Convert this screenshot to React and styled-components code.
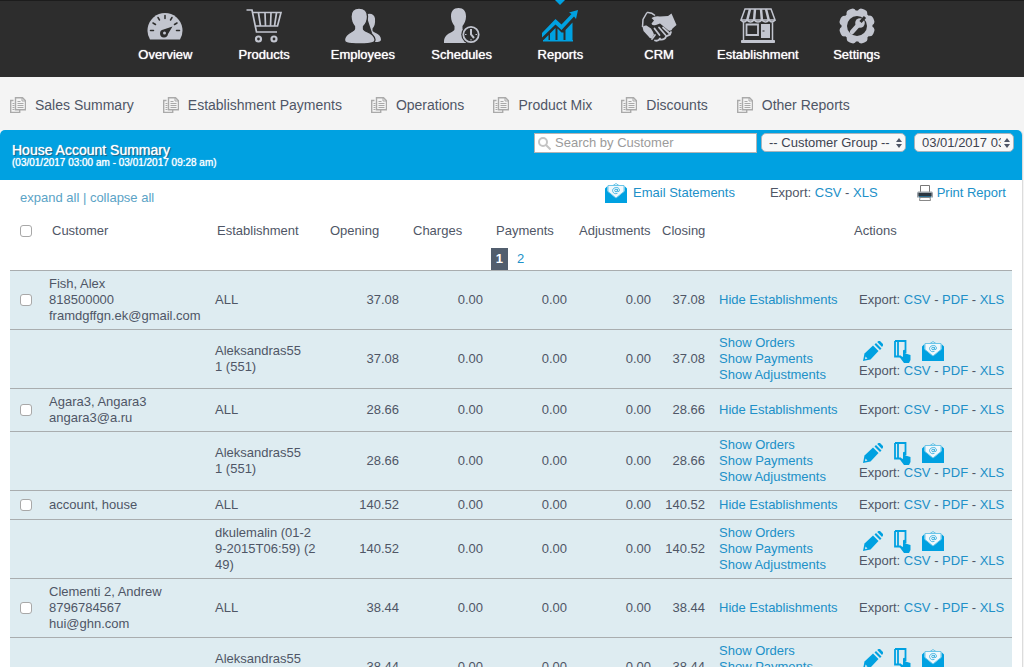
import React, { useState } from 'react'
import styled, { createGlobalStyle } from 'styled-components'

const GlobalStyle = createGlobalStyle`
    *{
        box-sizing:border-box;
    }
    body{
        margin:0;
        background-color:#f4f4f4;
        color:#4f5666;
        font-family:"Liberation Sans", Arial, sans-serif;
        font-size:13px;
        line-height:16px;
    }
`

const Nav = styled.nav`
    background-color:#2d2d2d;
    border-top:1px solid #1c1c1c;
    height:77px;
    padding-right:2px;
`
const NavList = styled.div`
    display:flex;
    max-width:790px;
    margin:0 auto;
`
const NavLink = styled.a`
    flex:1;
    display:flex;
    flex-direction:column;
    align-items:center;
    position:relative;
    padding-top:7px;
    gap:3px;
    color:#fff;
    text-decoration:none;
    text-shadow:0 0 1px #fff;

    svg{
        color:${props => props.$active ? "#00a1e1" : "#c2c5cf"};
    }
`
const Marker = styled.span`
    position:absolute;
    top:-1px;
    left:50%;
    margin-left:-5px;
    border:5px solid transparent;
    border-top-color:#00a1e1;
    border-bottom:0;
`

const Tabs = styled.nav`
    display:flex;
    flex-wrap:wrap;
    gap:29px;
    padding:20px 10px 17px;
`
const Tab = styled.a`
    display:flex;
    align-items:center;
    gap:9px;
    color:#4f5666;
    font-size:14px;
    text-decoration:none;
`

const Panel = styled.main`
    margin-right:1px;
    background-color:#fff;
    border-right:1px solid #dcdcdc;
    border-radius:5px 5px 0 0;
`
const PanelHeader = styled.header`
    display:flex;
    justify-content:space-between;
    align-items:flex-start;
    height:50px;
    padding:3px 8px 0 12px;
    background-color:#00a1e1;
    border-radius:5px 5px 0 0;
`
const Title = styled.h1`
    margin:9px 0 0;
    color:#fff;
    font-size:14px;
    font-weight:normal;
    line-height:16px;
    text-shadow:0 0 1px #fff, 1px 1px 1px #1d4a66;
`
const Period = styled.p`
    margin:0;
    color:#fff;
    font-size:10px;
    line-height:10px;
    text-shadow:0 0 1px #fff;
`
const Filters = styled.form`
    display:flex;
    align-items:flex-start;
`
const SearchBox = styled.label`
    display:flex;
    align-items:center;
    gap:4px;
    width:223px;
    height:20px;
    padding-left:3px;
    background-color:#fff;
    border:1px solid #b4b4b4;
`
const SearchInput = styled.input`
    flex:1;
    min-width:0;
    padding:0;
    border:0;
    outline:0;
    background:none;
    color:#4f5666;
    font:inherit;

    &::placeholder{
        color:#9b9b9b;
    }
`
const SelectBox = styled.span`
    position:relative;
    width:${props => props.$width}px;
    margin-left:${props => props.$gap}px;

    svg{
        position:absolute;
        top:5px;
        right:3px;
        pointer-events:none;
    }
`
const Select = styled.select`
    appearance:none;
    display:block;
    width:100%;
    height:19px;
    padding:0 12px 0 7px;
    border:1px solid #a8b4bc;
    border-radius:5px;
    background-color:#f8f8f8;
    color:#3d4350;
    font:inherit;
`

const Toolbar = styled.div`
    display:flex;
    align-items:flex-start;
    justify-content:space-between;
    height:38px;
    padding:1px 16px 0 20px;
`
const ExpandLinks = styled.div`
    padding-top:9px;
    color:#5ba3c6;

    a{
        color:inherit;
        text-decoration:none;
    }
`
const Tools = styled.div`
    display:flex;
    align-items:center;
    height:24px;
`
const Link = styled.a`
    color:#2090c8;
    text-decoration:none;
`
const ToolLink = styled(Link)`
    display:flex;
    align-items:center;
    gap:${props => props.$gap}px;
`
const ToolExport = styled.span`
    margin:0 39px 0 35px;
`

const Table = styled.table`
    display:block;
    margin:0 10px;
    border-spacing:0;

    thead, tbody{
        display:block;
    }
`
const HeadRow = styled.tr`
    display:grid;
    grid-template-columns:42px 1fr 113px 83px 83px 83px 83px 192px 158px;
    align-items:center;
    height:25px;
`
const HeadCell = styled.th`
    padding:0;
    font-weight:normal;
    text-align:left;
`
const PagerRow = styled.tr`
    display:grid;
    height:27px;
`
const Pager = styled.td`
    display:flex;
    justify-content:center;
    align-items:flex-end;
    padding:0 0 0 2px;
`
const Page = styled.a`
    padding:3px 5px;
    background-color:${props => props.$current ? "#525e6e" : "transparent"};
    color:${props => props.$current ? "#fff" : "#2090c8"};
    font-weight:${props => props.$current ? "bold" : "normal"};
    text-decoration:none;
    margin-right:4px;
`
const Row = styled.tr`
    display:grid;
    grid-template-columns:34px 1fr 110px 84px 84px 84px 84px 54px 144px 158px;
    align-items:center;
    min-height:29px;
    padding:5px 0;
    background-color:#deecf1;
    border-top:1px solid #a9adaf;
`
const Cell = styled.td`
    padding:0 5px;
`
const TextCell = styled(Cell)`
    white-space:pre;
`
const NumberCell = styled(Cell)`
    text-align:right;
`
const LinkCell = styled(Cell)`
    display:flex;
    flex-direction:column;
    align-items:flex-start;
    padding-left:9px;
`
const Checkbox = styled.input`
    appearance:none;
    display:block;
    width:12px;
    height:12px;
    margin:0 0 0 ${props => props.$inRow ? 5 : 10}px;
    border:1px solid #a8a8a8;
    border-radius:3px;
    background-color:#fff;

    &:checked{
        background-color:#2090c8;
    }
`
const Actions = styled.div`
    display:flex;
    align-items:center;
    height:24px;
    padding-left:4px;
    gap:11px;
`
const IconButton = styled.button`
    display:block;
    padding:0;
    border:0;
    background:none;
    color:#00a1e1;
    cursor:pointer;

    svg{
        display:block;
    }
`

const GaugeIcon = () => (
    <svg width="36" height="36" viewBox="0 0 36 36" aria-hidden="true">
        <path d="M3 31.500A17.500 17.500 0 1 1 33 31.500Z" fill="currentColor" />
        <g stroke="#2d2d2d" strokeWidth="1.500" strokeLinecap="round">
            <path d="M3.500 22.500h3M29.500 22.500h3M6 15l2.500 1.500M30 15l-2.500 1.500M11 9.500l1.500 2.500M25 9.500L23.500 12M18 7.500v3" />
        </g>
        <path d="M25.500 18.500L16.500 21.500A4 4 0 1 0 21 26Z" fill="#2d2d2d" />
        <circle cx="17.500" cy="25" r="1.500" fill="currentColor" />
    </svg>
)
const CartIcon = () => (
    <svg width="36" height="36" viewBox="0 0 36 36" fill="none" stroke="currentColor" strokeWidth="1.700" aria-hidden="true">
        <path d="M.5 2H6l4.500 22H31M7 4.500H35L31.500 18H10M12.500 5l2 13M19 5l.5 13M25 5l-.5 13M30.500 5l-2 13" />
        <circle cx="12.500" cy="31" r="2.500" strokeWidth="2.200" />
        <circle cx="28" cy="31" r="2.500" strokeWidth="2.200" />
    </svg>
)
const PeopleIcon = () => (
    <svg width="36" height="36" viewBox="0 0 36 36" fill="currentColor" aria-hidden="true">
        <path d="M21 6.500c4-2 8.500-.5 9 4 .4 5-.5 8-2.500 10v2c0 2 8.500 3 8.500 9 0 2-2 2.500-6 2.500Z" />
        <path d="M14 0c6 0 8.500 3.500 8.500 8.500 0 4-1.500 7.500-4 10v2.500c0 3 10.500 2.500 11.500 10.500.3 2.500-1 4.500-15 4.500S-.5 34.500-.5 32C0 24 9.500 24 9.500 21v-2.500C7.500 16 6 12.500 6 8.500 6 3.500 8.500 0 14 0Z" stroke="#2d2d2d" strokeWidth="1.300" />
    </svg>
)
const PersonClockIcon = () => (
    <svg width="36" height="36" viewBox="0 0 36 36" fill="currentColor" aria-hidden="true">
        <path d="M14.500 0c5 0 7.500 3 7.500 8.500 0 4-1.500 7-3.500 9.500v3c0 2.500 8 3 10 7v7H0c-.5-11 10.500-10 10.500-14v-3C8.500 15.500 7 12.500 7 8.500 7 3 9.500 0 14.500 0Z" />
        <circle cx="27" cy="26.500" r="9.700" fill="#2d2d2d" />
        <circle cx="27" cy="26.500" r="7.700" fill="none" stroke="currentColor" strokeWidth="1.800" />
        <path d="M27 21v5.500l3 3.500" fill="none" stroke="currentColor" strokeWidth="2" />
        <path d="M21 26.500h1.500M31.500 26.500H33M27 31v1.500" stroke="currentColor" />
    </svg>
)
const ReportsIcon = () => (
    <svg width="36" height="36" viewBox="0 0 36 36" fill="currentColor" aria-hidden="true">
        <path d="M0 25L13.500 11l6 5.500L29.500 6 27 4.500 36 2l-2 9-2-2.500L19.500 22 13.500 16.500 0 29.500Z" />
        <path d="M1 32.500L6.500 27V33H1ZM8 25.500l5.500-5.500v13H8ZM15.500 20.500l4 4h2V33h-6ZM23.500 22l7-7.500V33h-7Z" />
        <path d="M1 32h30v1.500H1Z" />
    </svg>
)
const HandshakeIcon = () => (
    <svg width="36" height="36" viewBox="0 0 36 36" fill="currentColor" aria-hidden="true">
        <path d="M10.500 10Q14 7.500 19 8.500l8-.500 3.500-2.500L35.500 17l-4 3.500q-1 3-4 2L19 15.500l-4 1.500q-4.500 1-4.500-1.500l2.500-3Z" />
        <path d="M6 4.500L2 11.500 1.500 19M6 4.500q4.500-.5 8 3" fill="none" stroke="currentColor" strokeWidth="1.500" />
        <path d="M1.500 19Q3 17 5.500 17.500l4.500 3q2 3 3 6l-2 3.500q-2 1-3-1L2.500 23Z" />
        <path d="M13.500 20.500l5 6.500M18 19.500l6.500 7.500M22 19.500l6 5.500M11 31l3-4M14 32.500q3 1 5-2M19 31.500q5 .5 6-3l4-2 1-2.500" fill="none" stroke="currentColor" strokeWidth="1.800" strokeLinecap="round" />
    </svg>
)
const StoreIcon = () => (
    <svg width="36" height="36" viewBox="0 0 36 36" fill="none" stroke="currentColor" aria-hidden="true">
        <path d="M5 1h26l4 11H1Z" strokeWidth="1.500" />
        <path d="M10 1L7 13M15 1l-1 12M21 1l1 12M26 1l3 12" strokeWidth="2.500" />
        <path d="M1 12q3 4 6 0 3.500 4 7 0 4 4 8 0 3.500 4 7 0 3 4 6 0M3.500 14v18M32.500 14v18" strokeWidth="1.500" />
        <path d="M6.500 16.500H18v10.500H6.500Z" strokeWidth="1.800" />
        <path d="M21 16h9v14h-9Z" fill="currentColor" stroke="none" />
        <path d="M22.500 23h2" stroke="#2d2d2d" />
        <path d="M1.500 32.500h33v2h-33Z" fill="currentColor" />
    </svg>
)
const SettingsIcon = () => (
    <svg width="36" height="36" viewBox="0 0 36 36" fill="currentColor" aria-hidden="true">
        {[22, 67, 112, 157].map(angle => (
            <rect key={angle} x="13" y="0" width="10" height="36" rx="4" transform={`rotate(${angle} 18 18)`} />
        ))}
        <circle cx="18" cy="18" r="15.500" />
        <circle cx="18" cy="18" r="10" fill="#2d2d2d" />
        <path d="M13 24l8-9" stroke="currentColor" strokeWidth="4.500" strokeLinecap="round" />
        <circle cx="21" cy="15" r="4.800" />
        <path d="M21.500 14l4.500-5" stroke="#2d2d2d" strokeWidth="3" />
    </svg>
)
const PagesIcon = () => (
    <svg width="16" height="16" viewBox="0 0 16 16" fill="none" stroke="#aaa" aria-hidden="true">
        <path d="M3.500 3.500H.700v12h9v-2.500" strokeWidth="1.400" />
        <path d="M5.500.700h7l3 3v9h-10Z" fill="#f4f4f4" strokeWidth="1.400" />
        <path d="M12 1v3h3M7.500 4.500h3M7.500 6.500h6M7.500 8.500h6M7.500 10.500h6M2.500 6.500h2M2.500 8.500h2M2.500 10.500h2M2.500 12.500h2" />
    </svg>
)
const SearchIcon = () => (
    <svg width="13" height="13" viewBox="0 0 13 13" fill="none" stroke="#c4c4c4" strokeWidth="2" aria-hidden="true">
        <circle cx="5" cy="5" r="4" />
        <path d="M8 8l4.500 4.500" />
    </svg>
)
const ArrowsIcon = () => (
    <svg width="8" height="10" viewBox="0 0 8 10" fill="#4f5666" aria-hidden="true">
        <path d="M4 0l3 4H1ZM4 10L1 6h6Z" />
    </svg>
)
const MailIcon = () => (
    <svg width="22" height="20" viewBox="0 0 22 20" aria-hidden="true">
        <path d="M0 5.500L2.500 3v5l8.500 7 8.500-7V3L22 5.500V20H0Z" fill="#00a1e1" />
        <path d="M3 8.500V2.500h16v6L11 15Z" fill="#f0f8fc" stroke="#6cc5e8" />
        <path d="M8 2.500l3-2 3 2" fill="none" stroke="#6cc5e8" />
        <circle cx="11" cy="7.500" r="1.300" fill="none" stroke="#3fb2e0" />
        <path d="M12.500 6v2.500q2 .5 2-1.500A3.500 3 0 1 0 12.500 10.300" fill="none" stroke="#3fb2e0" strokeWidth=".9" />
    </svg>
)
const PrinterIcon = () => (
    <svg width="16" height="16" viewBox="0 0 16 16" aria-hidden="true">
        <path d="M3.500 7V.5h9V7" fill="#fff" stroke="#777" />
        <path d="M1 6.500h14l1 1.500v4.500H0V8Z" fill="#9aa1a8" />
        <path d="M1.500 8h13v3h-13Z" fill="#2b3640" />
        <path d="M2 11h12v1.500H2Z" fill="#2b6f92" />
        <path d="M3 12.500h10l.5 3h-11Z" fill="#fff" stroke="#888" />
    </svg>
)
const PencilIcon = () => (
    <svg width="20" height="20" viewBox="0 0 20 20" fill="currentColor" aria-hidden="true">
        <path d="M0 20l1.500-7.500L10 4.500l5.500 5.500L7.500 18.500Z" />
        <path d="M11.500 3.500L13 2l5.500 5.500L17 9ZM14.200 1l1.300-1H17l3 3v1.500L19 6Z" />
        <path d="M2.500 15.500l2 2-2.500.8Z" fill="#deecf1" />
    </svg>
)
const LedgerIcon = () => (
    <svg width="17" height="23" viewBox="0 0 17 23" aria-hidden="true">
        <path d="M1 1h10.500v12M1 1v15.500h6M4 1v16" fill="none" stroke="currentColor" strokeWidth="1.800" />
        <path d="M9 10.500q1.500-1.500 2.500.5v2.500l5 1.500v5L15 23h-5l-4.500-6q.5-2 3.500 0Z" fill="currentColor" />
    </svg>
)

const navItems = [
    { label: "Overview", Icon: GaugeIcon },
    { label: "Products", Icon: CartIcon },
    { label: "Employees", Icon: PeopleIcon },
    { label: "Schedules", Icon: PersonClockIcon },
    { label: "Reports", Icon: ReportsIcon, active: true },
    { label: "CRM", Icon: HandshakeIcon },
    { label: "Establishment", Icon: StoreIcon },
    { label: "Settings", Icon: SettingsIcon },
]

const tabs = ["Sales Summary", "Establishment Payments", "Operations", "Product Mix", "Discounts", "Other Reports"]

const columns = ["Customer", "Establishment", "Opening", "Charges", "Payments", "Adjustments", "Closing", "Actions"]

const accounts = [
    { id: 1, customer: "Fish, Alex\n818500000\nframdgffgn.ek@gmail.com", place: "Aleksandras55\n1 (551)", amount: "37.08" },
    { id: 2, customer: "Agara3, Angara3\nangara3@a.ru", place: "Aleksandras55\n1 (551)", amount: "28.66" },
    { id: 3, customer: "account, house", place: "dkulemalin (01-2\n9-2015T06:59) (2\n49)", amount: "140.52" },
    { id: 4, customer: "Clementi 2, Andrew\n8796784567\nhui@ghn.com", place: "Aleksandras55\n1 (551)", amount: "38.44" },
]

const Amounts = ({ amount }) => (
    <>
        <NumberCell>{amount}</NumberCell>
        <NumberCell>0.00</NumberCell>
        <NumberCell>0.00</NumberCell>
        <NumberCell>0.00</NumberCell>
        <NumberCell>{amount}</NumberCell>
    </>
)

const ExportLinks = ({ types }) => (
    <>
        Export: {types.map((type, i) => (
            <React.Fragment key={type}>{i > 0 && " - "}<Link href="#">{type}</Link></React.Fragment>
        ))}
    </>
)

const Account = ({ account, checked, onToggle }) => (
    <>
        <Row>
            <Cell>
                <Checkbox type="checkbox" $inRow aria-label="Select customer" checked={checked} onChange={onToggle} />
            </Cell>
            <TextCell>{account.customer}</TextCell>
            <TextCell>ALL</TextCell>
            <Amounts amount={account.amount} />
            <LinkCell><Link href="#">Hide Establishments</Link></LinkCell>
            <Cell><ExportLinks types={["CSV", "PDF", "XLS"]} /></Cell>
        </Row>
        <Row>
            <Cell />
            <Cell />
            <TextCell>{account.place}</TextCell>
            <Amounts amount={account.amount} />
            <LinkCell>
                <Link href="#">Show Orders</Link>
                <Link href="#">Show Payments</Link>
                <Link href="#">Show Adjustments</Link>
            </LinkCell>
            <Cell>
                <Actions>
                    <IconButton type="button" aria-label="Edit"><PencilIcon /></IconButton>
                    <IconButton type="button" aria-label="Adjust"><LedgerIcon /></IconButton>
                    <IconButton type="button" aria-label="Email"><MailIcon /></IconButton>
                </Actions>
                <ExportLinks types={["CSV", "PDF", "XLS"]} />
            </Cell>
        </Row>
    </>
)

const App = () => {

    const [selected, setSelected] = useState([])
    const [search, setSearch] = useState("")

    const toggle = (id) => {
        setSelected(selected.includes(id) ? selected.filter(item => item !== id) : [...selected, id])
    }
    const toggleAll = (e) => {
        setSelected(e.target.checked ? accounts.map(item => item.id) : [])
    }

    return (
        <>
            <GlobalStyle />
            <Nav>
                <NavList>
                    {navItems.map(({ label, Icon, active }) => (
                        <NavLink href="#" key={label} $active={active}>
                            {active && <Marker />}
                            <Icon />
                            {label}
                        </NavLink>
                    ))}
                </NavList>
            </Nav>
            <Tabs>
                {tabs.map(tab => (
                    <Tab href="#" key={tab}><PagesIcon />{tab}</Tab>
                ))}
            </Tabs>
            <Panel>
                <PanelHeader>
                    <div>
                        <Title>House Account Summary</Title>
                        <Period>(03/01/2017 03:00 am - 03/01/2017 09:28 am)</Period>
                    </div>
                    <Filters>
                        <SearchBox>
                            <SearchIcon />
                            <SearchInput
                                aria-label="Search by Customer"
                                placeholder="Search by Customer"
                                value={search}
                                onChange={e => setSearch(e.target.value)}
                            />
                        </SearchBox>
                        <SelectBox $width={145} $gap={4}>
                            <Select aria-label="Customer group">
                                <option>-- Customer Group --</option>
                            </Select>
                            <ArrowsIcon />
                        </SelectBox>
                        <SelectBox $width={100} $gap={8}>
                            <Select aria-label="Period">
                                <option>03/01/2017 03:00 am - 03/01/2017 09:28 am</option>
                            </Select>
                            <ArrowsIcon />
                        </SelectBox>
                    </Filters>
                </PanelHeader>
                <Toolbar>
                    <ExpandLinks>
                        <a href="#">expand all</a> | <a href="#">collapse all</a>
                    </ExpandLinks>
                    <Tools>
                        <ToolLink href="#" $gap={6}><MailIcon />Email Statements</ToolLink>
                        <ToolExport><ExportLinks types={["CSV", "XLS"]} /></ToolExport>
                        <ToolLink href="#" $gap={4}><PrinterIcon />Print Report</ToolLink>
                    </Tools>
                </Toolbar>
                <Table>
                    <thead>
                        <HeadRow>
                            <HeadCell>
                                <Checkbox
                                    type="checkbox"
                                    aria-label="Select all"
                                    checked={selected.length === accounts.length}
                                    onChange={toggleAll}
                                />
                            </HeadCell>
                            {columns.map(column => (
                                <HeadCell key={column}>{column}</HeadCell>
                            ))}
                        </HeadRow>
                        <PagerRow>
                            <Pager>
                                <Page href="#" $current>1</Page>
                                <Page href="#">2</Page>
                            </Pager>
                        </PagerRow>
                    </thead>
                    <tbody>
                        {accounts.map(account => (
                            <Account
                                key={account.id}
                                account={account}
                                checked={selected.includes(account.id)}
                                onToggle={() => toggle(account.id)}
                            />
                        ))}
                    </tbody>
                </Table>
            </Panel>
        </>
    )
}

export default App
